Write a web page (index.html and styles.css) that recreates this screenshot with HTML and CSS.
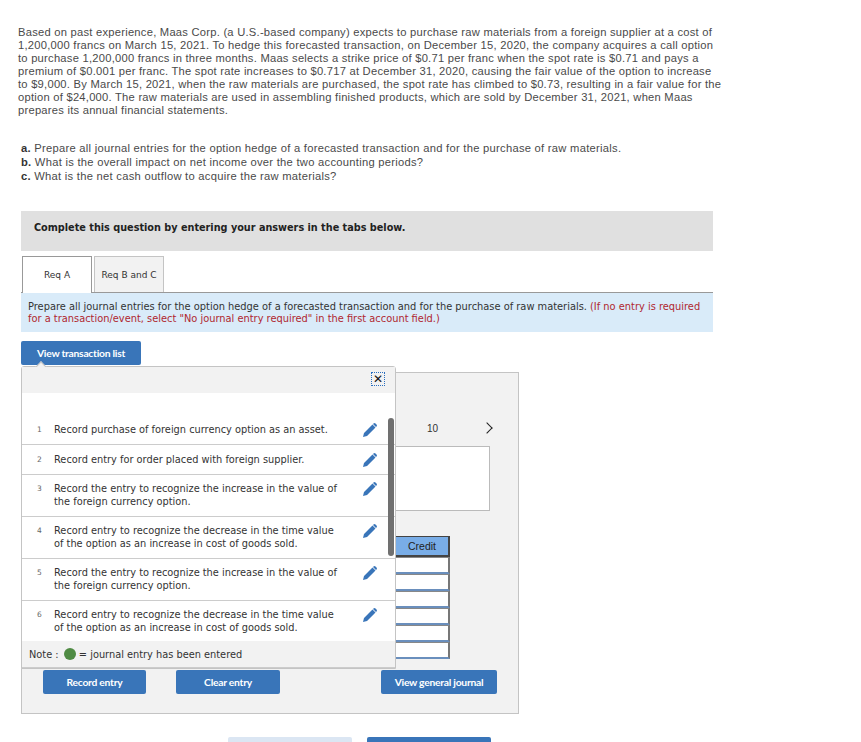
FILE: index.html
```html
<!DOCTYPE html>
<html lang="en">
<head>
    <meta charset="UTF-8">
    <title>Option hedge of a forecasted transaction</title>
    <link rel="stylesheet" href="styles.css">
</head>
<body>
<div class="page">
    <p class="problem">Based on past experience, Maas Corp. (a U.S.-based company) expects to purchase raw materials from a foreign supplier at a cost of<br>
    1,200,000 francs on March 15, 2021. To hedge this forecasted transaction, on December 15, 2020, the company acquires a call option<br>
    to purchase 1,200,000 francs in three months. Maas selects a strike price of $0.71 per franc when the spot rate is $0.71 and pays a<br>
    premium of $0.001 per franc. The spot rate increases to $0.717 at December 31, 2020, causing the fair value of the option to increase<br>
    to $9,000. By March 15, 2021, when the raw materials are purchased, the spot rate has climbed to $0.73, resulting in a fair value for the<br>
    option of $24,000. The raw materials are used in assembling finished products, which are sold by December 31, 2021, when Maas<br>
    prepares its annual financial statements.</p>

    <div class="parts">
        <div><b>a.</b> Prepare all journal entries for the option hedge of a forecasted transaction and for the purchase of raw materials.</div>
        <div><b>b.</b> What is the overall impact on net income over the two accounting periods?</div>
        <div><b>c.</b> What is the net cash outflow to acquire the raw materials?</div>
    </div>

    <div class="banner">Complete this question by entering your answers in the tabs below.</div>

    <div class="tabs">
        <div class="tab active">Req A</div>
        <div class="tab">Req B and C</div>
    </div>

    <div class="instruction">Prepare all journal entries for the option hedge of a forecasted transaction and for the purchase of raw materials. <span class="red">(If no entry is required<br>for a transaction/event, select "No journal entry required" in the first account field.)</span></div>

    <button type="button" class="btn list-btn">View transaction list</button>

    <div class="workspace">
        <div class="panel">
            <div class="pager"><span class="page-num">10</span><span class="next"></span></div>
            <div class="entry-box"></div>
            <div class="credit">
                <div class="credit-head">Credit</div>
                <div class="credit-row"></div>
                <div class="credit-row"></div>
                <div class="credit-row"></div>
                <div class="credit-row"></div>
                <div class="credit-row"></div>
                <div class="credit-row"></div>
            </div>
            <div class="panel-btns">
                <button type="button" class="btn">Record entry</button>
                <button type="button" class="btn clear">Clear entry</button>
                <button type="button" class="btn journal">View general journal</button>
            </div>
        </div>

        <div class="popup">
            <div class="popup-head"><span class="close">✕</span></div>
            <div class="rows">
                <div class="row first"><span class="num">1</span><span class="txt">Record purchase of foreign currency option as an asset.</span><svg class="pencil" viewBox="0 0 14 14"><path d="M0 14 L1 10 L9.5 1.5 L12.5 4.5 L4 13 Z M10.5 .5 Q11.5 -.4 12.5 .5 L13.5 1.5 Q14.4 2.5 13.5 3.5 L13 4 L10 1 Z"/></svg></div>
                <div class="row"><span class="num">2</span><span class="txt">Record entry for order placed with foreign supplier.</span><svg class="pencil" viewBox="0 0 14 14"><path d="M0 14 L1 10 L9.5 1.5 L12.5 4.5 L4 13 Z M10.5 .5 Q11.5 -.4 12.5 .5 L13.5 1.5 Q14.4 2.5 13.5 3.5 L13 4 L10 1 Z"/></svg></div>
                <div class="row tall"><span class="num">3</span><span class="txt">Record the entry to recognize the increase in the value of the foreign currency option.</span><svg class="pencil" viewBox="0 0 14 14"><path d="M0 14 L1 10 L9.5 1.5 L12.5 4.5 L4 13 Z M10.5 .5 Q11.5 -.4 12.5 .5 L13.5 1.5 Q14.4 2.5 13.5 3.5 L13 4 L10 1 Z"/></svg></div>
                <div class="row tall"><span class="num">4</span><span class="txt">Record entry to recognize the decrease in the time value of the option as an increase in cost of goods sold.</span><svg class="pencil" viewBox="0 0 14 14"><path d="M0 14 L1 10 L9.5 1.5 L12.5 4.5 L4 13 Z M10.5 .5 Q11.5 -.4 12.5 .5 L13.5 1.5 Q14.4 2.5 13.5 3.5 L13 4 L10 1 Z"/></svg></div>
                <div class="row tall"><span class="num">5</span><span class="txt">Record the entry to recognize the increase in the value of the foreign currency option.</span><svg class="pencil" viewBox="0 0 14 14"><path d="M0 14 L1 10 L9.5 1.5 L12.5 4.5 L4 13 Z M10.5 .5 Q11.5 -.4 12.5 .5 L13.5 1.5 Q14.4 2.5 13.5 3.5 L13 4 L10 1 Z"/></svg></div>
                <div class="row tall last"><span class="num">6</span><span class="txt">Record entry to recognize the decrease in the time value of the option as an increase in cost of goods sold.</span><svg class="pencil" viewBox="0 0 14 14"><path d="M0 14 L1 10 L9.5 1.5 L12.5 4.5 L4 13 Z M10.5 .5 Q11.5 -.4 12.5 .5 L13.5 1.5 Q14.4 2.5 13.5 3.5 L13 4 L10 1 Z"/></svg></div>
                <div class="scrollbar"></div>
            </div>
            <div class="note">Note : <span class="dot"></span> = journal entry has been entered</div>
        </div>
    </div>

    <div class="bottom-btns">
        <div class="nav prev"></div>
        <div class="nav nxt"></div>
    </div>
</div>
</body>
</html>
```

FILE: styles.css
```css
html, body { margin: 0; height: 742px; overflow: hidden; background: #fff; }
body { font-family: 'Liberation Sans', sans-serif; color: #4a4a4a; }
.page { padding: 26px 148px 0 21px; width: 692px; }

.problem { margin: 0 0 0 -3px; font-size: 11.2px; letter-spacing: .24px; line-height: 13px; white-space: nowrap; }
.parts { margin-top: 24px; font-size: 11.2px; letter-spacing: .27px; line-height: 14px; white-space: nowrap; }
.parts b { color: #333; }

.banner {
    margin-top: 28px;
    height: 40px;
    line-height: 33px;
    padding-left: 13px;
    background: #e0e0e0;
    color: #222;
    font-family: 'DejaVu Sans', sans-serif;
    font-size: 9.7px;
    font-weight: bold;
}

.tabs { display: flex; gap: 2px; margin-top: 5px; padding-left: 1px; border-bottom: 1px solid #999; height: 36px; }
.tab {
    width: 68px;
    border: 1px solid #c4c4c4;
    border-bottom: none;
    background: #f2f2f2;
    color: #333;
    font-family: 'DejaVu Sans', sans-serif;
    font-size: 9px;
    text-align: center;
    line-height: 37px;
}
.tab.active { background: #fff; border-color: #999; height: 36px; }

.instruction {
    height: 31px;
    padding: 8px 7px 0;
    background: #d9ebf9;
    color: #333;
    font-family: 'DejaVu Sans', sans-serif;
    font-size: 9.86px;
    line-height: 12px;
    white-space: nowrap;
}
.red { color: #b0272f; }

.btn {
    border: none;
    border-radius: 2px;
    background: #3975b9;
    color: #fff;
    font-family: 'Lato', sans-serif;
    font-size: 10.3px;
    font-weight: bold;
    letter-spacing: -.25px;
    height: 24px;
    padding: 0;
}
.list-btn { display: block; width: 120px; margin-top: 9px; }

.workspace { position: relative; margin-top: 7px; }
.panel {
    box-sizing: border-box;
    width: 498px;
    height: 342px;
    border: 1px solid #c4c4c4;
    background: #f2f2f2;
    display: flex;
    flex-direction: column;
}
.pager { display: flex; justify-content: flex-end; align-items: center; height: 16px; margin-top: 47px; padding-right: 24px; font-family: 'Liberation Sans', sans-serif; font-size: 10px; color: #333; }
.page-num { margin-right: 45px; }
.next { width: 7px; height: 7px; border: solid #222; border-width: 1.5px 1.5px 0 0; transform: rotate(45deg); margin-right: 3px; }
.entry-box { align-self: flex-end; width: 300px; margin: 10px 28px 0 0; background: #fff; border: 1px solid #bbb; box-sizing: border-box; height: 65px; }
.credit { align-self: flex-end; width: 200px; margin: 25px 68px 0 0; }
.credit-head { line-height: 18px; text-align: center; padding-left: 146px; background: #79ade7; border: 1px solid #444; border-width: 1px 2px 2px 0; font-family: 'Liberation Sans', sans-serif; font-size: 10.5px; color: #222; box-sizing: border-box; height: 21px; }
.credit-row { height: 17px; box-sizing: border-box; background: #fff; border-bottom: 2px solid #6a8fbd; border-right: 2px solid #777; border-top: 1px solid #888; }
.panel-btns { display: flex; padding: 11px 21px 0 21px; }
.panel-btns .btn { width: 103px; }
.panel-btns .clear { width: 104px; margin-left: 30px; }
.panel-btns .journal { width: 116px; margin-left: auto; }

.popup {
    position: absolute;
    top: -6px;
    left: 0;
    box-sizing: border-box;
    width: 375px;
    height: 303px;
    background: #fff;
    border: 1px solid #c4c4c4;
    border-top-right-radius: 3px;
    border-top-left-radius: 3px;
    font-family: 'DejaVu Sans', sans-serif;
    color: #333;
}
.popup::before {
    content: "";
    position: absolute;
    top: -4px;
    left: 15px;
    width: 7px;
    height: 7px;
    background: #f2f2f2;
    border: solid #c4c4c4;
    border-width: 1px 0 0 1px;
    transform: rotate(45deg);
}
.popup-head { position: relative; height: 26px; background: #f2f2f2; }
.close {
    position: absolute;
    top: 5px;
    right: 10px;
    width: 12px;
    height: 12px;
    border: 1px dotted #2a6fc0;
    color: #111;
    font-size: 12px;
    font-weight: bold;
    line-height: 12px;
    text-align: center;
}
.rows { position: relative; height: 248px; overflow: hidden; }
.row { display: flex; align-items: flex-start; height: 30px; box-sizing: border-box; padding: 8px 0 0 15px; border-bottom: 1px solid #ccc; font-size: 9.8px; line-height: 13px; }
.row.first { height: 52px; padding-top: 30px; }
.row.tall { height: 42px; padding-top: 7px; }
.row.last { border-bottom: none; }
.num { width: 17px; flex: none; font-size: 7.5px; color: #666; }
.txt { width: 285px; flex: none; }
.pencil { width: 14px; height: 14px; flex: none; margin-left: 24px; fill: #3975b9; }
.scrollbar { position: absolute; top: 25px; right: 1px; width: 6px; height: 138px; border-radius: 3px; background: #707070; }
.note { height: 27px; box-sizing: border-box; padding: 0 0 0 7px; border-bottom: 1px solid #ccc; background: #f2f2f2; font-size: 9.8px; line-height: 27px; display: flex; align-items: center; white-space: pre; }
.dot { width: 12px; height: 12px; margin-left: 2px; border-radius: 50%; background: #4f8b43; }

.bottom-btns { display: flex; gap: 15px; margin: 23px 0 0 207px; }
.nav { width: 124px; height: 30px; border-radius: 2px; }
.prev { background: #dbe6f3; }
.nxt { background: #3975b9; }
```
